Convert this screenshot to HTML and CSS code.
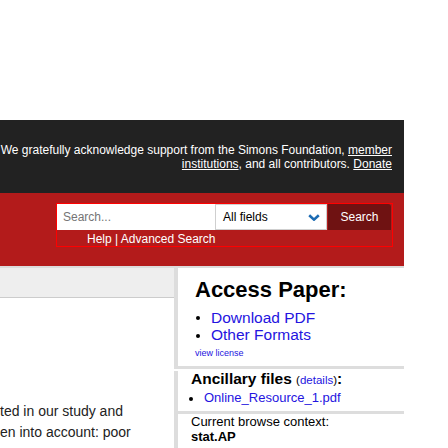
FILE: index.html
```html
<!DOCTYPE html>
<html>
<head>
<meta charset="utf-8">
<link rel="stylesheet" href="styles.css">
</head>
<body>
<div class="page">
  <div class="topspace"></div>
  <div class="ack">
    <p class="ack-text">We gratefully acknowledge support from the Simons Foundation, <a href="#">member<br>institutions</a>, and all contributors. <a href="#">Donate</a></p>
  </div>
  <div class="searchband">
    <form class="search">
      <div class="search-row">
        <input class="search-input" type="text" placeholder="Search...">
        <div class="select">
          <span>All fields</span>
          <svg class="chev" width="12" height="7" viewBox="0 0 12 7"><path d="M1.2 1.2 L6 5.6 L10.8 1.2" fill="none" stroke="#1c6bb3" stroke-width="2.6" stroke-linecap="butt" stroke-linejoin="miter"/></svg>
        </div>
        <button class="search-btn" type="button">Search</button>
      </div>
      <div class="help"><a href="#">Help</a> | <a href="#">Advanced Search</a></div>
    </form>
  </div>
  <div class="main">
    <div class="left">
      <div class="crumb"></div>
      <p class="abs">ted in our study and<br>en into account: poor</p>
    </div>
    <div class="side">
      <div class="box1">
        <h2 class="access">Access Paper:</h2>
        <ul class="links">
          <li><a href="#">Download PDF</a></li>
          <li><a href="#">Other Formats</a></li>
        </ul>
        <div class="license"><a href="#">view license</a></div>
      </div>
      <div class="group">
        <div class="box2">
          <h3 class="anc">Ancillary files <span class="det">(<a href="#">details</a>)</span>:</h3>
          <ul class="files">
            <li><a href="#">Online_Resource_1.pdf</a></li>
          </ul>
        </div>
        <div class="box3">
          <div>Current browse context:</div>
          <div class="ctx">stat.AP</div>
        </div>
      </div>
    </div>
  </div>
</div>
</body>
</html>
```

FILE: styles.css
```css
* { box-sizing: border-box; }
html, body { margin: 0; padding: 0; background: #fff; }
body { font-family: "Liberation Sans", Arial, sans-serif; color: #000; }

.page { width: 404px; }
.topspace { height: 120px; }

.ack {
  background: #222;
  height: 73px;
  padding: 23px 12px 0 0;
  display: flex;
  justify-content: flex-end;
  overflow: hidden;
}
.ack-text {
  flex: none;
  margin: 0;
  white-space: nowrap;
  text-align: right;
  color: #fff;
  font-size: 12px;
  line-height: 14px;
}
.ack-text a { color: #fff; text-decoration: underline; }

.searchband {
  background: #b31b1b;
  height: 75px;
  padding: 10px 0 0 56px;
  border-bottom: 2px solid #dcdcdc;
}
.search {
  width: 337px;
  margin: 0;
  border: 1px solid #ff0000;
}
.search-row { display: flex; height: 26px; }
.search-input {
  width: 158px;
  height: 26px;
  border: 0;
  margin: 0;
  padding: 0 0 0 6px;
  font-family: "Liberation Sans", Arial, sans-serif;
  font-size: 12px;
  background: #fff;
  outline: none;
}
.search-input::placeholder { color: #757575; }
.select {
  width: 112px;
  height: 26px;
  border: 1px solid #cfcfcf;
  background: #fff;
  display: flex;
  align-items: center;
  justify-content: space-between;
  padding: 0 6px 0 7px;
  font-size: 12px;
  color: #000;
}
.chev { display: block; }
.search-btn {
  width: 63px;
  height: 26px;
  margin: 0 0 0 1px;
  border: 0;
  border-radius: 0 3px 0 0;
  background: #6f1212;
  color: #fff;
  font-family: "Liberation Sans", Arial, sans-serif;
  font-size: 12px;
  padding: 0;
}
.help {
  height: 16px;
  padding: 3px 0 0 30px;
  line-height: 13px;
  font-size: 12px;
  color: #fff;
}
.help a { color: #fff; text-decoration: none; }

.main { display: flex; }
.left { width: 174px; overflow: hidden; }
.crumb {
  height: 30px;
  background: #eeeeee;
  border-bottom: 1px solid #cccccc;
}
.abs {
  margin: 102.5px 0 0 0;
  font-size: 14px;
  line-height: 21px;
  color: #222;
  white-space: nowrap;
}

.side { width: 230px; }
.side a { color: #2414e0; text-decoration: none; }

.box1 {
  border-left: 4px solid #dddddd;
  border-bottom: 3px solid #dddddd;
  padding: 9px 0 7.5px 17px;
  margin-bottom: 2px;
}
.access {
  margin: 0;
  font-size: 22px;
  line-height: 25px;
  font-weight: bold;
  color: #000;
}
.links {
  list-style: none;
  margin: 6.5px 0 0 0.5px;
  padding: 0;
  font-size: 15.5px;
  line-height: 17.5px;
}
.links li::before {
  content: "";
  display: inline-block;
  width: 4px;
  height: 4px;
  border-radius: 50%;
  background: #000;
  margin-right: 11.5px;
  vertical-align: middle;
}
.license {
  margin-top: 4px;
  font-size: 9px;
  line-height: 11px;
}

.group {
  border-left: 4px solid #dddddd;
  padding-bottom: 20px;
}
.box2 {
  border-bottom: 3px solid #dddddd;
  padding: 0 0 6px 13px;
}
.anc {
  margin: 0;
  font-size: 15.5px;
  line-height: 16px;
  font-weight: bold;
  color: #000;
}
.det {
  font-size: 11.5px;
  font-weight: normal;
}
.files {
  list-style: none;
  margin: 2px 0 0 -2px;
  padding: 0;
  font-size: 13px;
  line-height: 15px;
}
.files li::before {
  content: "";
  display: inline-block;
  width: 4px;
  height: 4px;
  border-radius: 50%;
  background: #000;
  margin-right: 11px;
  vertical-align: middle;
}
.box3 {
  padding-left: 13px;
  font-size: 13px;
  line-height: 15px;
  color: #000;
}
.ctx { font-weight: bold; }
```
